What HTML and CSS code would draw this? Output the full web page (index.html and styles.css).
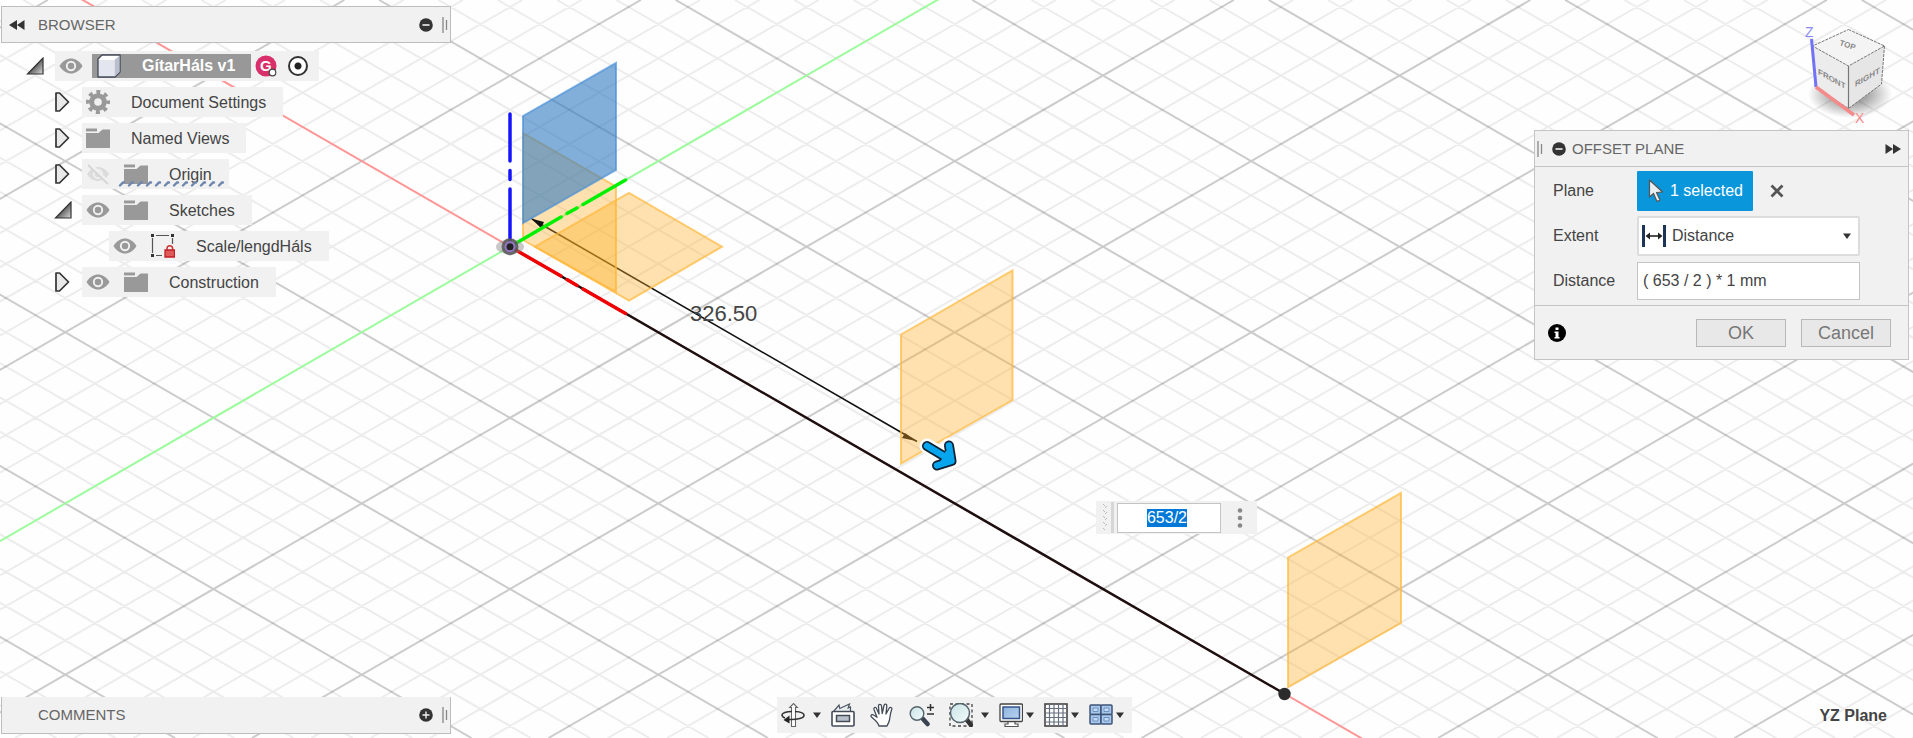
FILE: index.html
```html
<!DOCTYPE html>
<html lang="en">
<head>
<meta charset="utf-8">
<title>GítarHáls v1</title>
<link rel="stylesheet" href="styles.css">
</head>
<body>
<svg class="defs" aria-hidden="true">
  <defs>
    <linearGradient id="wedge" x1="0" y1="0" x2="1" y2="1"><stop offset="0.3" stop-color="#333"/><stop offset="1" stop-color="#ddd"/></linearGradient>
    <linearGradient id="lens" x1="0" y1="0" x2="1" y2="1"><stop offset="0" stop-color="#c9e3e6"/><stop offset="1" stop-color="#f4fbfb"/></linearGradient>
    <linearGradient id="screen" x1="0" y1="0" x2="1" y2="1"><stop offset="0" stop-color="#8fb4e0"/><stop offset="1" stop-color="#b9d2ee"/></linearGradient>
    <radialGradient id="shade"><stop offset="0.4" stop-color="#000" stop-opacity="0.35"/><stop offset="1" stop-color="#000" stop-opacity="0"/></radialGradient>
    <symbol id="i-closed" viewBox="0 0 16 20"><path d="M2 1h3.500l9 9-9 9H2z" fill="#e9e9e9" stroke="#333" stroke-width="1.700" stroke-linejoin="round"/></symbol>
    <symbol id="i-open" viewBox="0 0 18 18"><path d="M17 1v16H1.500z" fill="url(#wedge)" stroke="#333" stroke-width="1.200"/></symbol>
    <symbol id="i-eye" viewBox="0 0 24 24"><path d="M0.500 12C4 6.500 8 4.500 12 4.500S20 6.500 23.500 12C20 17.500 16 19.500 12 19.500S4 17.500 0.500 12z" fill="#999"/><circle cx="12" cy="12" r="4.200" fill="none" stroke="#f1f1f1" stroke-width="1.900"/></symbol>
    <symbol id="i-eye-off" viewBox="0 0 24 24"><path d="M1 12C4.500 7 8 5 12 5S20 7 23 12C20 17 16 19 12 19S4 17 1 12z" fill="#dcdcdc"/><circle cx="12" cy="12" r="4.200" fill="none" stroke="#f1f1f1" stroke-width="1.700"/><path d="M4 2l20 20" stroke="#f1f1f1" stroke-width="3"/><path d="M2 3l20 19" stroke="#d6d6d6" stroke-width="1.800"/></symbol>
    <symbol id="i-folder" viewBox="0 0 24 24"><path d="M0 2.500h11v3H0zM0 7h12.500l4-3.500H24V22H0z" fill="#999"/><path d="M0 6.300h12" stroke="#f1f1f1"/></symbol>
    <symbol id="i-minus" viewBox="0 0 14 14"><circle cx="7" cy="7" r="6.800" fill="#333"/><path d="M3.500 7h7" stroke="#f1f1f1" stroke-width="1.600"/></symbol>
    <symbol id="i-plus" viewBox="0 0 14 14"><circle cx="7" cy="7" r="6.800" fill="#333"/><path d="M3.500 7h7M7 3.500v7" stroke="#f1f1f1" stroke-width="1.400"/></symbol>
    <symbol id="i-grip" viewBox="0 0 6 16"><path d="M1 0v16M4.500 3v10" stroke="#888" stroke-width="1.300"/></symbol>
    <symbol id="i-rewind" viewBox="0 0 16 10"><path d="M8 0v10L0 5zM15.500 0v10L8 5z" fill="#333"/></symbol>
    <symbol id="i-caret" viewBox="0 0 8 6"><path d="M0 0.500h8L4 6z" fill="#333"/></symbol>
  </defs>
</svg>

<main class="app">
  <svg class="canvas" role="img" aria-label="3D model view">
    <path id="grid-minor" class="grid-minor"/>
    <path id="grid-major" class="grid-major"/>
    <path class="axis-faint axis-x" d="M-90 -99.800L510 246.700L1510 824"/>
    <path class="axis-faint axis-y" d="M-90 593L1110 -99.700"/>
    <path d="M510 246.700L1284 693.500" stroke="#1c1010" stroke-width="2.500"/>
    <path d="M532 219L917 441.500" stroke="#111" stroke-width="1.600"/>
    <path d="M916 441l-14-3 3-5z" fill="#111"/>
    <text class="dimension" x="690" y="321">326.50</text>
    <path class="plane" d="M523 133L616 186.500V292L523 240z"/>
    <path class="plane" d="M535 246.700L629 193L722 246.700L629 300.700z"/>
    <path class="plane plane-selected" d="M523 116L616 63V170L523 223z"/>
    <path class="plane" d="M901 334.500L1012.500 270.500V400L901 463.500z"/>
    <path class="plane" d="M1288 557.500L1401 493V623L1288 687z"/>
    <path d="M531 218.500l13 3.500-3 6z" fill="#111"/>
    <g fill="none" stroke-width="3.500" stroke-linecap="round">
      <path d="M510 246.700L561 217M567 213.500L577 208M583 204.500L625.500 180" stroke="#00f000"/>
      <path d="M510 246.700L561 276M567 279.600L577 285.500M583 289L625.500 313.500" stroke="#f00000"/>
      <path d="M510 114V161M510 170.500V179.500M510 189V240" stroke="#1414ff"/>
    </g>
    <ellipse cx="510" cy="246.700" rx="14" ry="7.500" fill="#888" opacity="0.450"/>
    <circle cx="510" cy="246.700" r="8.500" fill="#555" opacity="0.850"/>
    <circle cx="510" cy="246.700" r="4.500" fill="#222" stroke="#9675c9" stroke-width="2"/>
    <circle cx="1284.500" cy="694" r="6.200" fill="#2b2b2b"/>
    <g fill="none" stroke-linecap="round" stroke-linejoin="round">
      <path d="M927 446L947 458M949 445.500L951.500 461L937 465.500" stroke="#fff" stroke-width="15"/>
      <path d="M927 446L947 458M949 445.500L951.500 461L937 465.500" stroke="#123" stroke-width="10"/>
      <path d="M927 446L947 458M949 445.500L951.500 461L937 465.500" stroke="#06a5ee" stroke-width="6.500"/>
      <path d="M947 452l3 8-8 2z" fill="#06a5ee" stroke="#06a5ee" stroke-width="3"/>
    </g>
  </svg>

  <div class="left">
    <nav class="browser" aria-label="Browser">
      <header class="bar">
        <button class="plain" aria-label="Collapse"><svg width="16" height="10"><use href="#i-rewind"/></svg></button>
        <h2 class="bar-title">BROWSER</h2>
        <button class="plain" aria-label="Minimize"><svg width="14" height="14"><use href="#i-minus"/></svg></button>
        <svg class="grip" width="6" height="16"><use href="#i-grip"/></svg>
      </header>
      <ul class="tree">
        <li class="row root">
          <button class="plain toggle" aria-label="Collapse GítarHáls"><svg width="18" height="18"><use href="#i-open"/></svg></button>
          <div class="chip">
            <svg width="24" height="24"><use href="#i-eye"/></svg>
            <span class="doc">
              <svg width="26" height="24" viewBox="0 0 26 24"><path d="M2 5l4-4h18v17l-5 5H2z" fill="#fff" stroke="#444a5a" stroke-width="1.400" stroke-linejoin="round"/><path d="M3 6h15v16H3z" fill="#e3e6ee"/><path d="M18.500 6L23.500 1.500V18l-5 4.500z" fill="#b9bfcd"/></svg>
              <span>GítarHáls v1</span>
            </span>
            <svg width="22" height="22" viewBox="0 0 22 22"><circle cx="11" cy="11" r="10.500" fill="#d92f6b"/><text x="5" y="16" class="badge-letter">G</text><circle cx="17.500" cy="17.500" r="3.300" fill="#fff" stroke="#444" stroke-width="1.200"/></svg>
            <label class="active-dot"><input type="radio" checked aria-label="Activate component"></label>
          </div>
        </li>
        <li class="row">
          <button class="plain toggle" aria-label="Expand"><svg width="16" height="20"><use href="#i-closed"/></svg></button>
          <div class="chip"><svg width="24" height="24" viewBox="0 0 24 24"><circle cx="12" cy="12" r="6.300" fill="none" stroke="#999" stroke-width="5"/><circle cx="12" cy="12" r="10" fill="none" stroke="#999" stroke-width="4" stroke-dasharray="3.927 3.927" stroke-dashoffset="1.960"/></svg><span class="name">Document Settings</span></div>
        </li>
        <li class="row">
          <button class="plain toggle" aria-label="Expand"><svg width="16" height="20"><use href="#i-closed"/></svg></button>
          <div class="chip"><svg width="24" height="24"><use href="#i-folder"/></svg><span class="name">Named Views</span></div>
        </li>
        <li class="row">
          <button class="plain toggle" aria-label="Expand"><svg width="16" height="20"><use href="#i-closed"/></svg></button>
          <div class="chip"><svg class="eye" width="24" height="24"><use href="#i-eye-off"/></svg><svg width="24" height="24"><use href="#i-folder"/></svg><span class="name">Origin</span>
            <svg class="hatch" width="106" height="7" viewBox="0 0 106 7"><path d="M2 5.500l3-3h1M11 5.500l3-3h1M20 5.500l3-3h1M29 5.500l3-3h1M38 5.500l3-3h1M47 5.500l3-3h1M56 5.500l3-3h1M65 5.500l3-3h1M74 5.500l3-3h1M83 5.500l3-3h1M92 5.500l3-3h1M101 5.500l3-3h1" fill="none" stroke="#6d86ad" stroke-width="2.400" stroke-linecap="round"/></svg></div>
        </li>
        <li class="row">
          <button class="plain toggle" aria-label="Collapse"><svg width="18" height="18"><use href="#i-open"/></svg></button>
          <div class="chip"><svg class="eye" width="24" height="24"><use href="#i-eye"/></svg><svg width="24" height="24"><use href="#i-folder"/></svg><span class="name">Sketches</span></div>
        </li>
        <li class="row leaf">
          <div class="chip"><svg class="eye" width="24" height="24"><use href="#i-eye"/></svg><svg width="24" height="24" viewBox="0 0 24 24"><path d="M1.500 4v15M5 1.500h13M21.500 4v6M5 21.500h6" stroke="#555" stroke-width="1.200"/><path d="M0 0h3v3H0zM20 0h3v3h-3zM0 20h3v3H0z" fill="#333"/><path d="M16 16v-1.500a2.800 2.800 0 0 1 5.600 0V16" fill="none" stroke="#c33" stroke-width="1.500"/><path d="M14 16h9.500v7H14z" fill="#e05a5a" stroke="#c01f26" stroke-width="1.300"/></svg><span class="name">Scale/lengdHáls</span></div>
        </li>
        <li class="row">
          <button class="plain toggle" aria-label="Expand"><svg width="16" height="20"><use href="#i-closed"/></svg></button>
          <div class="chip"><svg class="eye" width="24" height="24"><use href="#i-eye"/></svg><svg width="24" height="24"><use href="#i-folder"/></svg><span class="name">Construction</span></div>
        </li>
      </ul>
    </nav>
    <section class="bar comments">
      <h2 class="bar-title">COMMENTS</h2>
      <button class="plain" aria-label="Expand comments"><svg width="14" height="14"><use href="#i-plus"/></svg></button>
      <svg class="grip" width="6" height="16"><use href="#i-grip"/></svg>
    </section>
  </div>

  <div class="toolbar" role="toolbar" aria-label="Navigation">
    <button class="plain tool" aria-label="Orbit">
      <svg width="24" height="24" viewBox="0 0 24 24"><path d="M10.500 23.500V4.500H8.700L12.500 0.500l3.800 4h-1.800v19z" fill="#fff" stroke="#666" stroke-width="1.100"/><path d="M11 8.500C5 8.500 1 10 1 12c0 1.200 1.200 2.200 3 2.900M14 8.500c5 .3 9 1.500 9 3.700 0 2.800-6 4.600-15 4.300" fill="none" stroke="#333" stroke-width="1.600"/><path d="M8.500 12.500v8L2.500 17z" fill="#222"/></svg>
      <svg width="8" height="6"><use href="#i-caret"/></svg>
    </button>
    <button class="plain tool" aria-label="Look at">
      <svg width="24" height="24" viewBox="0 0 24 24"><path d="M2.500 8.500L8 2l.8 3.500L18.500 1l-1.300 4 2.300-1v4.500z" fill="#e8ecef" stroke="#4a5560" stroke-width="1.200"/><rect x="1" y="8.500" width="22" height="14.500" rx="1" fill="#fff" stroke="#444c58" stroke-width="1.600"/><rect x="5.500" y="12.500" width="13" height="6" fill="#b9bfc8" stroke="#444c58" stroke-width="1.500"/></svg>
    </button>
    <button class="plain tool pan" aria-label="Pan">
      <svg width="24" height="24" viewBox="0 0 24 24"><path d="M9 23c-1-4-4-6-7.500-9-1.500-2 .8-3 2.500-1.700l3 2L4 6.500C3.300 4.500 5.700 3.500 6.500 5.500L9 11 8.500 3c0-2.300 2.700-2.300 3 0l.7 7.500L14 2.500c.5-2.200 3-1.700 2.800.5L16 11l3-5.500c1.200-2 3.500-1 2.700 1C20 11 20 14 19.500 17c-.5 2-1.500 4-2.500 6z" fill="#fff" stroke="#444c58" stroke-width="1.300" stroke-linejoin="round"/></svg>
    </button>
    <button class="plain tool zoom" aria-label="Zoom">
      <svg width="26" height="24" viewBox="0 0 26 24"><path d="M14 16l4.500 5" stroke="#3a4350" stroke-width="4.500" stroke-linecap="round"/><circle cx="8" cy="10.500" r="6.800" fill="url(#lens)" stroke="#56646c" stroke-width="1.400"/><path d="M18 4.500h7M21.500 1v7M18 11h7" stroke="#333" stroke-width="1.500"/></svg>
    </button>
    <button class="plain tool" aria-label="Zoom window">
      <svg width="24" height="24" viewBox="0 0 24 24"><path d="M1 1h22v22H1z" fill="none" stroke="#444" stroke-width="1.300" stroke-dasharray="3 2.500"/><path d="M18 17l4 5" stroke="#333" stroke-width="4.500" stroke-linecap="round"/><circle cx="11" cy="10" r="9.500" fill="url(#lens)" stroke="#56646c" stroke-width="1.500"/></svg>
      <svg width="8" height="6"><use href="#i-caret"/></svg>
    </button>
    <button class="plain tool tight" aria-label="Display settings">
      <svg width="24" height="24" viewBox="0 0 24 24"><path d="M9 18h7v3h3v2.500H6V21h3z" fill="#fff" stroke="#555" stroke-width="1.200"/><rect x="1" y="1" width="22.500" height="17.500" rx="1" fill="#fff" stroke="#444" stroke-width="1.300"/><rect x="4" y="4" width="16.500" height="11.500" fill="url(#screen)" stroke="#35548a" stroke-width="1.500"/></svg>
      <svg width="8" height="6"><use href="#i-caret"/></svg>
    </button>
    <button class="plain tool tight" aria-label="Grid and snaps">
      <svg width="24" height="24" viewBox="0 0 24 24"><rect x="1" y="1" width="22" height="22" fill="#fff" stroke="#444" stroke-width="1.600"/><path d="M5.500 1v22M10 1v22M14.500 1v22M19 1v22M1 5.500h22M1 10h22M1 14.500h22M1 19h22" stroke="#667080" stroke-width="1.200"/></svg>
      <svg width="8" height="6"><use href="#i-caret"/></svg>
    </button>
    <button class="plain tool tight" aria-label="Viewports">
      <svg width="24" height="24" viewBox="0 0 24 24"><g fill="#a9c7ea" stroke="#3d5478" stroke-width="1.500"><rect x="1" y="2" width="11" height="9.500" rx="1"/><rect x="12" y="2" width="11" height="9.500" rx="1"/><rect x="1" y="11.500" width="11" height="9.500" rx="1"/><rect x="12" y="11.500" width="11" height="9.500" rx="1"/></g><path d="M4 5h5v3.500H4zM15 5h5v3.500h-5zM4 14.500h5V18H4zM15 14.500h5V18h-5z" fill="#c7dbf3" stroke="#6c94c6"/></svg>
      <svg width="8" height="6"><use href="#i-caret"/></svg>
    </button>
  </div>

  <div class="right">
    <svg class="viewcube" width="96" height="108" viewBox="0 0 96 108" role="img" aria-label="View cube">
      <ellipse cx="50" cy="74" rx="42" ry="24" fill="url(#shade)"/>
      <path d="M48.500 9.500L84.500 26 48.500 46 12.500 26z" fill="#f4f4f4"/>
      <path d="M12.500 26L48.500 46V88.500L16 67.500z" fill="#ececec"/>
      <path d="M84.500 26L48.500 46V88.500L81.500 64z" fill="#e6e6e6"/>
      <path d="M48.500 9.500L84.500 26 48.500 46 12.500 26zM84.500 26L81.500 64 48.500 88.500 16 67.500" fill="none" stroke="#777" stroke-dasharray="3 1"/>
      <path d="M48.500 46V88.500" stroke="#777" stroke-width="1.200"/>
      <g class="cube-label">
        <text transform="translate(18 54) skewY(29)">FRONT</text>
        <text transform="translate(55 67) skewY(-30)">RIGHT</text>
        <text transform="translate(39 25) rotate(18)">TOP</text>
      </g>
      <path d="M11.500 19L16 67" stroke="#7272f5" stroke-width="3"/>
      <path d="M16 67L54 95" stroke="#f58a8a" stroke-width="3.500"/>
      <text class="axis-name" x="5" y="17" fill="#8a8af8">Z</text>
      <text class="axis-name" x="55" y="103" fill="#f88a8a">X</text>
    </svg>

    <form class="dialog" onsubmit="return false">
      <header class="dialog-head">
        <svg width="6" height="16"><use href="#i-grip"/></svg>
        <button type="button" class="plain" aria-label="Minimize"><svg width="14" height="14"><use href="#i-minus"/></svg></button>
        <h2 class="bar-title">OFFSET PLANE</h2>
        <button type="button" class="plain flip" aria-label="Expand"><svg width="16" height="10"><use href="#i-rewind"/></svg></button>
      </header>
      <div class="fields">
        <label for="plane">Plane</label>
        <div class="plane-field">
          <button type="button" id="plane" class="selected"><svg width="16" height="24" viewBox="0 0 16 24"><path d="M1.500 1v17l4-3.500 3.500 8 3-1.500-3.500-7.500 6-.5z" fill="#e9eef2" stroke="#555" stroke-width="1.200" stroke-linejoin="round"/></svg>1 selected</button>
          <button type="button" class="plain" aria-label="Clear selection"><svg width="14" height="14" viewBox="0 0 14 14"><path d="M1.500 1.500l11 11M12.500 1.500l-11 11" stroke="#555" stroke-width="2.800"/></svg></button>
        </div>
        <label for="extent">Extent</label>
        <div class="select-box">
          <svg width="24" height="24" viewBox="0 0 24 24"><path d="M1.500 1v22M22.500 1v22" stroke="#1c3557" stroke-width="3"/><path d="M5 12h14" stroke="#222" stroke-width="1.600"/><path d="M8 8.500v7L3.500 12zM16 8.500v7l4.500-3.500z" fill="#222"/></svg>
          <select id="extent"><option>Distance</option><option>To Object</option></select>
          <svg width="8" height="6"><use href="#i-caret"/></svg>
        </div>
        <label for="distance">Distance</label>
        <input id="distance" class="text-box" type="text" value="( 653 / 2 ) * 1 mm">
      </div>
      <footer class="dialog-foot">
        <svg class="info" width="18" height="18" viewBox="0 0 18 18"><circle cx="9" cy="9" r="9" fill="#000"/><path d="M7.500 3.500h3v2.500h-3zM6.500 7.500h4V13h1v1.500h-5V13h1V9h-1z" fill="#fff"/></svg>
        <button class="action">OK</button>
        <button type="button" class="action">Cancel</button>
      </footer>
    </form>
    <output class="status">YZ Plane</output>
  </div>

  <div class="floating">
    <svg width="15" height="31" viewBox="0 0 15 31"><path d="M2 2l2 2M6 4l-2 2M2 8l2 2M6 10l-2 2M2 14l2 2M6 16l-2 2M2 20l2 2M6 22l-2 2M2 26l2 2" stroke="#bbb"/><path d="M11.500 0v31" stroke="#d6d6d6" stroke-width="3"/></svg>
    <input id="offset" class="text-box" type="text" value="653/2" aria-label="Offset distance">
    <button class="plain" aria-label="More"><svg width="6" height="22" viewBox="0 0 6 22"><g fill="#888"><circle cx="3" cy="3.500" r="2.300"/><circle cx="3" cy="11" r="2.300"/><circle cx="3" cy="18.500" r="2.300"/></g></svg></button>
  </div>
</main>
<script src="grid.js"></script>
</body>
</html>
```

FILE: styles.css
```css
* { box-sizing: border-box; }

body {
  margin: 0;
  background: #fefefe;
  color: #444;
  font: 16px/20px "Liberation Sans", Arial, sans-serif;
}

svg { display: block; flex: none; }
.defs { position: absolute; width: 0; height: 0; }
button, input, select { font: inherit; color: inherit; }
.plain { border: 0; padding: 0; background: none; }

.app {
  position: relative;
  display: grid;
  grid-template-columns: 1fr auto 1fr;
  min-height: 100vh;
  overflow: hidden;
}
.left, .right, .toolbar { position: relative; }

/* Model canvas */
.canvas { position: absolute; inset: 0; width: 100%; height: 100%; }
.grid-minor { fill: none; stroke: #000; stroke-opacity: 0.07; stroke-width: 2; }
.grid-major { fill: none; stroke: #000; stroke-opacity: 0.2; stroke-width: 2; }
.axis-faint { fill: none; stroke-width: 2; }
.axis-x { stroke: #ff9696; }
.axis-y { stroke: #9cfb9c; }
.plane { fill: #ffb020; fill-opacity: 0.36; stroke: #ffb83c; stroke-opacity: 0.7; stroke-width: 2; }
.plane-selected { fill: #2f7ac2; fill-opacity: 0.6; stroke: #4a90d8; }
.dimension { font-size: 22px; fill: #444; }

/* Left column */
.left { display: flex; flex-direction: column; justify-content: space-between; padding: 6px 0 4px 1px; }
.bar {
  display: flex;
  align-items: center;
  width: 450px;
  height: 37px;
  padding: 0 2px 0 7px;
  background: #f1f1f1;
  border: 1px solid #bdbdbd;
}
.bar-title { margin: 0; font-size: 15px; font-weight: 400; color: #666; }
.bar .bar-title { flex: 1; margin-left: 13px; }
.comments { padding-left: 23px; border-top: 0; }
.grip { margin-left: 9px; }

.tree { display: grid; gap: 6px; margin: 8px 0 0; padding: 0; list-style: none; }
.row { display: flex; align-items: center; height: 30px; padding-left: 53px; }
.root { padding-left: 25px; }
.leaf { padding-left: 108px; }
.toggle { width: 28px; }
.root .toggle { width: 29px; }
.chip {
  position: relative;
  display: flex;
  align-items: center;
  height: 30px;
  padding: 0 17px 0 4px;
  background: #f1f1f1;
}
.root .chip { padding-right: 11px; }
.name { margin-left: 21px; padding-top: 1px; }
.eye { margin-right: 14px; }
.doc {
  display: flex;
  align-items: center;
  gap: 20px;
  height: 24px;
  margin: 0 4px 0 9px;
  padding: 0 16px 0 4px;
  background: #989898;
  color: #fff;
  font-weight: 700;
}
.badge-letter { font-size: 15px; font-weight: 700; fill: #fff; }
.active-dot { display: flex; margin-left: 11px; }
.active-dot input {
  appearance: none;
  width: 20px;
  height: 20px;
  margin: 0;
  border: 2px solid #333;
  border-radius: 50%;
  background: radial-gradient(circle, #222 0 3px, #fff 4px);
}
.hatch { position: absolute; left: 36px; bottom: 2px; }

/* Bottom toolbar */
.toolbar {
  align-self: end;
  display: flex;
  align-items: center;
  gap: 10px;
  height: 36px;
  margin: 0 4px 5px 0;
  padding: 0 8px 0 4px;
  background: #f1f1f1;
}
.tool { display: flex; align-items: center; gap: 8px; }
.tight { gap: 3px; }
.pan { margin: 0 5px; }
.zoom { margin-right: 4px; }

/* Right column */
.right { display: flex; flex-direction: column; align-items: flex-end; padding: 20px 4px 12px 0; }
.viewcube { margin-right: 13px; }
.cube-label { font-size: 8px; font-weight: 700; fill: #888; }
.axis-name { font-size: 14px; }

.dialog { width: 375px; margin-top: 2px; background: #f1f1f1; border: 1px solid #c4c4c4; }
.dialog-head { display: flex; align-items: center; height: 36px; padding: 0 7px 0 2px; border-bottom: 1px solid #c4c4c4; }
.dialog-head .plain { margin-left: 9px; }
.dialog-head .bar-title { flex: 1; margin-left: 6px; }
.flip { transform: scaleX(-1); }
.fields {
  display: grid;
  grid-template-columns: 84px 223px;
  grid-auto-rows: 40px;
  gap: 5px 0;
  align-items: center;
  padding: 4px 0 4px 18px;
}
.plane-field { display: flex; align-items: center; gap: 17px; }
.selected {
  display: flex;
  align-items: center;
  gap: 6px;
  height: 40px;
  padding: 0 10px 0 11px;
  border: 0;
  border-radius: 1px;
  background: #0a96db;
  color: #fff;
}
.select-box {
  display: flex;
  align-items: center;
  height: 40px;
  padding: 0 7px 0 3px;
  background: #fff;
  border: 2px solid #dcdcdc;
  border-radius: 2px;
}
.select-box select { flex: 1; min-width: 0; margin-left: 6px; padding: 0; border: 0; background: none; appearance: none; }
.text-box { min-width: 0; padding: 0 5px; background: #fff; border: 1px solid #c4c4c4; border-radius: 0; outline: 0; }
.fields .text-box { height: 38px; }
.dialog-foot { display: flex; align-items: center; gap: 15px; height: 54px; padding: 0 17px 0 13px; border-top: 1px solid #c4c4c4; }
.info { margin-right: auto; }
.action { width: 90px; height: 28px; padding: 0; border: 1px solid #b8b8b8; background: #e8e8e8; color: #777; font-size: 18px; }
.status { margin: auto 22px 0 0; font-weight: 700; }

/* Value editor placed on the canvas beside the manipulator */
.floating {
  position: absolute;
  left: 1096px;
  top: 501px;
  display: flex;
  align-items: center;
  gap: 1px;
  height: 33px;
  padding: 0 14px 0 5px;
  background: #f1f1f1;
}
.floating .text-box { width: 104px; height: 30px; padding-right: 9px; text-align: center; }
.floating .plain { margin-left: 15px; }
.floating .text-box::selection { background: #0078d7; color: #fff; }
```

FILE: grid.js
```js
// Isometric ground grid: minor lines with every fifth one drawn as major.
const origin = { x: 510, y: 246.7 };
const major = 296.5;
const slope = 0.5773;

function drawGrid() {
  const { width, height } = document.querySelector(".canvas").getBoundingClientRect();
  const step = major / 5;
  const count = Math.ceil((width + height / slope + origin.x) / step) + 5;
  let minorPath = "";
  let majorPath = "";
  for (let i = -count; i <= count; i++) {
    if (i === 0) continue;
    const down = origin.x + i * step - origin.y / slope;
    const up = origin.x + i * step + origin.y / slope;
    const run = height / slope;
    const d = `M${down} 0L${down + run} ${height}M${up} 0L${up - run} ${height}`;
    if (i % 5 === 0) majorPath += d;
    else minorPath += d;
  }
  document.getElementById("grid-minor").setAttribute("d", minorPath);
  document.getElementById("grid-major").setAttribute("d", majorPath);
}

drawGrid();
window.addEventListener("resize", drawGrid);

const offset = document.getElementById("offset");
offset.focus();
offset.select();
```
